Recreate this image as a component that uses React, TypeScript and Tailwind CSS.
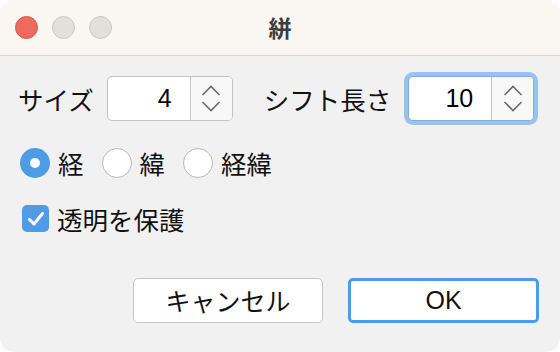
const font = "font-['Hiragino_Sans','Noto_Sans_CJK_JP',sans-serif]";

function Stepper({ value, focused }: { value: string; focused?: boolean }) {
  return (
    <div
      className={
        "flex h-[45px] w-[126px] overflow-hidden rounded-[5px] border bg-white " +
        (focused
          ? "border-[#7eaee0] shadow-[0_0_0_4px_#9ac2ea]"
          : "border-[#c3c3c3]")
      }
    >
      <div className="flex flex-1 items-center justify-end pr-[18px] text-[25px] text-black font-['Liberation_Sans',sans-serif]">
        {value}
      </div>
      <div className="flex w-[42px] flex-col items-center justify-center gap-[5px] border-l border-[#c3c3c3] bg-[#f8f8f8]">
        <svg width="20" height="11" viewBox="0 0 20 11" fill="none">
          <path d="M1.5 10 L10 1.5 L18.5 10" stroke="#6b6b6b" strokeWidth="1.6" />
        </svg>
        <svg width="20" height="11" viewBox="0 0 20 11" fill="none">
          <path d="M1.5 1 L10 9.5 L18.5 1" stroke="#6b6b6b" strokeWidth="1.6" />
        </svg>
      </div>
    </div>
  );
}

function Radio({ checked, label }: { checked?: boolean; label: string }) {
  return (
    <div className="flex items-center gap-[8px]">
      {checked ? (
        <span className="flex h-[30px] w-[30px] items-center justify-center rounded-full bg-[#4f9be6]">
          <span className="h-[10px] w-[10px] rounded-full bg-white" />
        </span>
      ) : (
        <span className="h-[30px] w-[30px] rounded-full border-[1.5px] border-[#b9b9b9] bg-white" />
      )}
      <span>{label}</span>
    </div>
  );
}

export default function App() {
  return (
    <div className="h-[352px] w-[560px] bg-white">
      <div
        className={
          "flex h-full w-full flex-col overflow-hidden rounded-[14px] bg-[#f1f1f1] text-[25.5px] leading-none text-[#111] " +
          font
        }
      >
        {/* title bar */}
        <div className="relative flex h-[56px] shrink-0 items-center border-b border-[#d9d6d2] bg-[#faf6f1] pl-[15px]">
          <div className="flex gap-[14px]">
            <span className="h-[23px] w-[23px] rounded-full border border-[#d8574d] bg-[#ee6a5f]" />
            <span className="h-[23px] w-[23px] rounded-full border border-[#cbc6c0] bg-[#e3dfd9]" />
            <span className="h-[23px] w-[23px] rounded-full border border-[#cbc6c0] bg-[#e3dfd9]" />
          </div>
          <div className="absolute inset-0 flex items-center justify-center text-[23px] font-bold text-[#3d3d3d]">
            絣
          </div>
        </div>

        {/* body */}
        <div className="flex flex-1 flex-col pl-[18px] pr-[21px]">
          <div className="mt-[20px] flex items-center">
            <span>サイズ</span>
            <div className="ml-[13px]">
              <Stepper value="4" />
            </div>
            <span className="ml-[31px]">シフト長さ</span>
            <div className="ml-[17px]">
              <Stepper value="10" focused />
            </div>
          </div>

          <div className="mt-[27px] flex items-center gap-[18px] pl-[2px]">
            <Radio checked label="経" />
            <Radio label="緯" />
            <Radio label="経緯" />
          </div>

          <div className="mt-[27px] flex items-center gap-[8px] pl-[4px]">
            <span className="flex h-[27px] w-[27px] items-center justify-center rounded-[5px] bg-[#4f9be6]">
              <svg width="18" height="16" viewBox="0 0 18 16" fill="none">
                <path
                  d="M2.5 8.5 L7 13 L15.5 2.5"
                  stroke="white"
                  strokeWidth="3"
                  strokeLinecap="round"
                  strokeLinejoin="round"
                />
              </svg>
            </span>
            <span>透明を保護</span>
          </div>

          <div className="mt-auto mb-[29px] flex justify-end gap-[25px]">
            <button className="flex h-[45px] w-[190px] items-center justify-center rounded-[5px] border-[1.5px] border-[#c4c4c4] bg-white text-[25px] text-[#111]">
              キャンセル
            </button>
            <button className="flex h-[45px] w-[191px] items-center justify-center rounded-[5px] border-[3px] border-[#4f9be6] bg-white text-[25px] text-[#111] font-['Liberation_Sans',sans-serif]">
              OK
            </button>
          </div>
        </div>
      </div>
    </div>
  );
}
